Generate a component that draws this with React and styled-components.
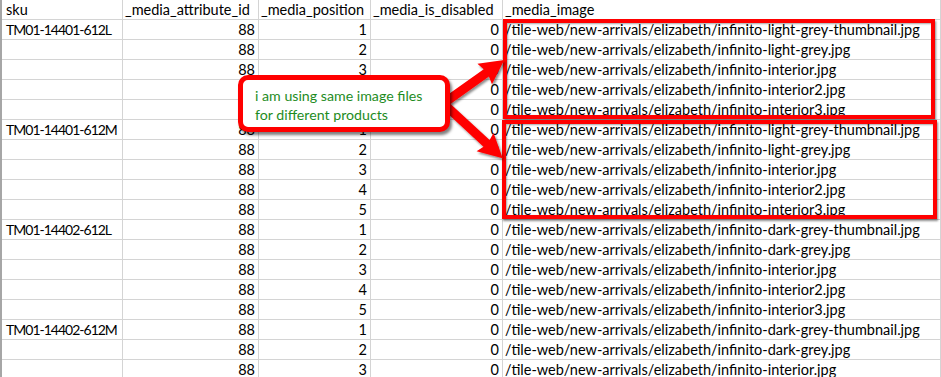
import React from "react";
import styled, { createGlobalStyle } from "styled-components";

const GlobalStyle = createGlobalStyle`
  html, body {
    margin: 0;
    padding: 0;
    background: #fff;
    overflow: hidden;
  }
`;

const LINE = "#d4d4d4";

const rows = [
  ["TM01-14401-612L", 88, 1, 0, "/tile-web/new-arrivals/elizabeth/infinito-light-grey-thumbnail.jpg"],
  ["", 88, 2, 0, "/tile-web/new-arrivals/elizabeth/infinito-light-grey.jpg"],
  ["", 88, 3, 0, "/tile-web/new-arrivals/elizabeth/infinito-interior.jpg"],
  ["", 88, 4, 0, "/tile-web/new-arrivals/elizabeth/infinito-interior2.jpg"],
  ["", 88, 5, 0, "/tile-web/new-arrivals/elizabeth/infinito-interior3.jpg"],
  ["TM01-14401-612M", 88, 1, 0, "/tile-web/new-arrivals/elizabeth/infinito-light-grey-thumbnail.jpg"],
  ["", 88, 2, 0, "/tile-web/new-arrivals/elizabeth/infinito-light-grey.jpg"],
  ["", 88, 3, 0, "/tile-web/new-arrivals/elizabeth/infinito-interior.jpg"],
  ["", 88, 4, 0, "/tile-web/new-arrivals/elizabeth/infinito-interior2.jpg"],
  ["", 88, 5, 0, "/tile-web/new-arrivals/elizabeth/infinito-interior3.jpg"],
  ["TM01-14402-612L", 88, 1, 0, "/tile-web/new-arrivals/elizabeth/infinito-dark-grey-thumbnail.jpg"],
  ["", 88, 2, 0, "/tile-web/new-arrivals/elizabeth/infinito-dark-grey.jpg"],
  ["", 88, 3, 0, "/tile-web/new-arrivals/elizabeth/infinito-interior.jpg"],
  ["", 88, 4, 0, "/tile-web/new-arrivals/elizabeth/infinito-interior2.jpg"],
  ["", 88, 5, 0, "/tile-web/new-arrivals/elizabeth/infinito-interior3.jpg"],
  ["TM01-14402-612M", 88, 1, 0, "/tile-web/new-arrivals/elizabeth/infinito-dark-grey-thumbnail.jpg"],
  ["", 88, 2, 0, "/tile-web/new-arrivals/elizabeth/infinito-dark-grey.jpg"],
  ["", 88, 3, 0, "/tile-web/new-arrivals/elizabeth/infinito-interior.jpg"],
];

const headers = ["sku", "_media_attribute_id", "_media_position", "_media_is_disabled", "_media_image"];

const App = () => {
  return (
    <Page>
      <GlobalStyle />
      <Sheet>
        <Row>
          {headers.map((h, i) => (
            <Cell key={i} $first={i === 0}>{h}</Cell>
          ))}
        </Row>
        {rows.map((r, ri) => (
          <Row key={ri}>
            <Cell $first $tight>{r[0]}</Cell>
            <Cell $num>{r[1]}</Cell>
            <Cell $num>{r[2]}</Cell>
            <Cell $num>{r[3]}</Cell>
            <Cell>{r[4]}</Cell>
          </Row>
        ))}
      </Sheet>

      <Highlight $top={19} $left={503} $width={432} $height={100} />
      <Highlight $top={120} $left={502} $width={435} $height={99} />

      <Arrows width="941" height="377" viewBox="0 0 941 377">
        <defs>
          <filter id="sh" x="-20%" y="-20%" width="140%" height="140%">
            <feDropShadow dx="1.5" dy="2" stdDeviation="1.2" floodColor="#000" floodOpacity="0.45" />
          </filter>
        </defs>
        <g filter="url(#sh)" fill="#ff0000">
          <polygon points="0,-4.5 52,-4.5 50,-12.5 74,0 50,12.5 52,4.5 0,4.5" transform="translate(444 103) rotate(-35.5)" />
          <polygon points="0,-4.5 58,-4.5 56,-12.5 80,0 56,12.5 58,4.5 0,4.5" transform="translate(444 104) rotate(42.8)" />
        </g>
      </Arrows>

      <Callout>
        i am using same image files
        <br />
        for different products
      </Callout>
    </Page>
  );
};

const Page = styled.div`
  position: relative;
  width: 941px;
  height: 377px;
  overflow: hidden;
  background: #fff;
  font-family: Lato, "Open Sans", sans-serif;
`;

const Sheet = styled.div`
  display: flex;
  flex-direction: column;
  border-left: 2px solid #a6a6a6;
`;

const Row = styled.div`
  display: grid;
  grid-template-columns: 121px 136px 112px 132px 1fr;
  height: 20px;
  box-sizing: border-box;
  border-bottom: 1px solid ${LINE};
`;

const Cell = styled.div`
  box-sizing: border-box;
  border-right: 1px solid ${LINE};
  padding: 1px ${(p) => (p.$num ? "3px" : "0")} 0 ${(p) => (p.$first ? "4px" : "2px")};
  text-align: ${(p) => (p.$num ? "right" : "left")};
  font-size: ${(p) => (p.$tight ? "14px" : "14.5px")};
  letter-spacing: ${(p) => (p.$tight ? "-1px" : "0")};
  line-height: 18px;
  color: #000;
  white-space: nowrap;
  overflow: hidden;
`;

const Highlight = styled.div`
  position: absolute;
  top: ${(p) => p.$top}px;
  left: ${(p) => p.$left}px;
  width: ${(p) => p.$width}px;
  height: ${(p) => p.$height}px;
  box-sizing: border-box;
  border: 4px solid #ff0000;
  box-shadow: 1px 2px 2px rgba(0, 0, 0, 0.45), inset 1px 1px 2px rgba(0, 0, 0, 0.35);
`;

const Arrows = styled.svg`
  position: absolute;
  top: 0;
  left: 0;
  pointer-events: none;
`;

const Callout = styled.div`
  position: absolute;
  top: 75px;
  left: 238px;
  width: 212px;
  height: 57px;
  box-sizing: border-box;
  border: 5px solid #ff0000;
  border-radius: 10px;
  background: #fff;
  box-shadow: 2px 3px 3px rgba(0, 0, 0, 0.5);
  padding: 6px 0 0 12px;
  color: #1e8c1e;
  font-size: 14.2px;
  line-height: 19px;
`;

export default App;
